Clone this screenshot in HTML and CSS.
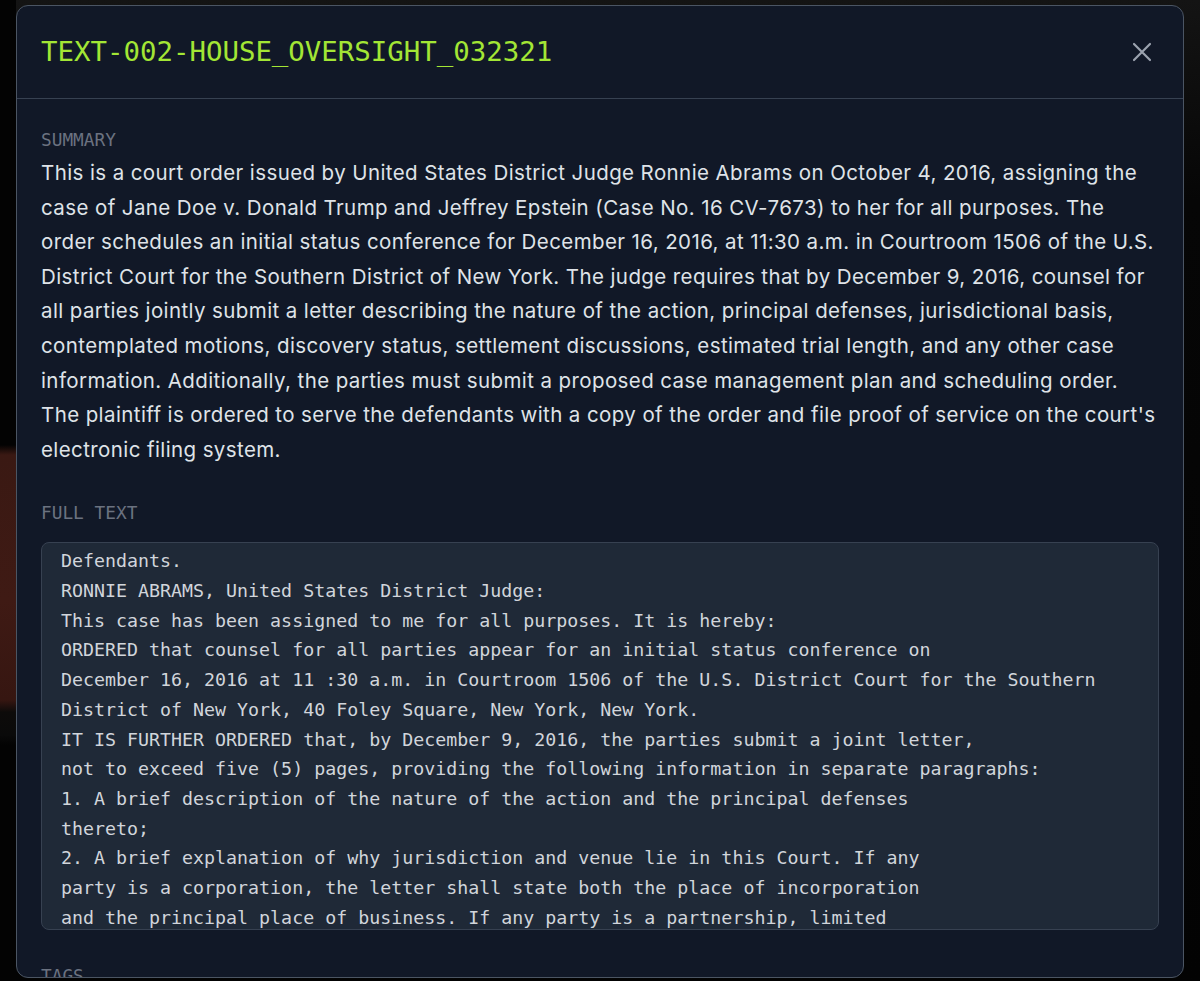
FILE: index.html
```html
<!DOCTYPE html>
<html lang="en">
<head>
<meta charset="utf-8">
<title>TEXT-002-HOUSE_OVERSIGHT_032321</title>
<link rel="stylesheet" href="styles.css">
</head>
<body>
<div class="backdrop">
  <div class="modal">
    <header class="modal-header">
      <h1 class="doc-title">TEXT-002-HOUSE_OVERSIGHT_032321</h1>
      <button class="close-btn" aria-label="Close">
        <svg width="22" height="22" viewBox="0 0 22 22" fill="none" stroke="currentColor" stroke-width="2.2" stroke-linecap="round">
          <path d="M3 3 L19 19 M19 3 L3 19"/>
        </svg>
      </button>
    </header>
    <div class="modal-body">
      <section class="section">
        <div class="label">SUMMARY</div>
        <p class="summary">This is a court order issued by United States District Judge Ronnie Abrams on October 4, 2016, assigning the case of Jane Doe v. Donald Trump and Jeffrey Epstein (Case No. 16 CV-7673) to her for all purposes. The order schedules an initial status conference for December 16, 2016, at 11:30 a.m. in Courtroom 1506 of the U.S. District Court for the Southern District of New York. The judge requires that by December 9, 2016, counsel for all parties jointly submit a letter describing the nature of the action, principal defenses, jurisdictional basis, contemplated motions, discovery status, settlement discussions, estimated trial length, and any other case information. Additionally, the parties must submit a proposed case management plan and scheduling order. The plaintiff is ordered to serve the defendants with a copy of the order and file proof of service on the court's electronic filing system.</p>
      </section>
      <section class="section">
        <div class="label">FULL TEXT</div>
        <div class="fulltext"><pre>Defendants.
RONNIE ABRAMS, United States District Judge:
This case has been assigned to me for all purposes. It is hereby:
ORDERED that counsel for all parties appear for an initial status conference on
December 16, 2016 at 11 :30 a.m. in Courtroom 1506 of the U.S. District Court for the Southern
District of New York, 40 Foley Square, New York, New York.
IT IS FURTHER ORDERED that, by December 9, 2016, the parties submit a joint letter,
not to exceed five (5) pages, providing the following information in separate paragraphs:
1. A brief description of the nature of the action and the principal defenses
thereto;
2. A brief explanation of why jurisdiction and venue lie in this Court. If any
party is a corporation, the letter shall state both the place of incorporation
and the principal place of business. If any party is a partnership, limited
liability company or trust, the letter shall state the citizenship of each of the
entity's members, shareholders, partners and/or trustees.</pre></div>
      </section>
      <section class="section">
        <div class="label">TAGS</div>
      </section>
    </div>
  </div>
</div>
</body>
</html>
```

FILE: styles.css
```css
* { box-sizing: border-box; }

html, body {
  margin: 0;
  padding: 0;
  height: 100%;
}

body {
  background: #030303;
  overflow: hidden;
}

.backdrop {
  height: 981px;
  padding: 5px 16px 0 16px;
  background:
    linear-gradient(180deg, #030303 0, #030303 445px, #3a1913 455px, #3f1a14 600px, #361611 700px, #0d0b0a 712px, #0a0a0a 735px, #030303 745px) left top / 16px 100% no-repeat,
    linear-gradient(180deg, #141414 0, #060606 200px, #030303 100%);
}

.modal {
  height: 973px;
  display: flex;
  flex-direction: column;
  background: #111827;
  border: 1px solid #4b5563;
  border-radius: 12px;
  overflow: hidden;
}

.modal-header {
  flex: none;
  display: flex;
  align-items: center;
  justify-content: space-between;
  height: 93px;
  padding: 0 24px 0 24px;
  border-bottom: 1px solid #374151;
}

.doc-title {
  margin: 0;
  font-family: "DejaVu Sans Mono", monospace;
  font-weight: normal;
  font-size: 27.4px;
  line-height: 36px;
  color: #a3e635;
}

.close-btn {
  background: none;
  border: none;
  padding: 0;
  margin-right: 5px;
  color: #9ca3af;
  display: flex;
  align-items: center;
  justify-content: center;
  width: 24px;
  height: 24px;
  cursor: pointer;
}

.modal-body {
  flex: 1;
  overflow: hidden;
  padding: 27px 24px 0 24px;
  display: flex;
  flex-direction: column;
  gap: 32px;
}

.label {
  font-family: "DejaVu Sans Mono", monospace;
  font-size: 17.8px;
  line-height: 28px;
  color: #6b7280;
}

.summary {
  margin: 2px 0 0 0;
  font-family: Inter, "Noto Sans", sans-serif;
  font-size: 20.5px;
  letter-spacing: 0.4px;
  line-height: 34.6px;
  color: #dfe3e8;
}

.fulltext {
  margin-top: 15px;
  height: 388px;
  overflow: hidden;
  background: #1f2937;
  border: 1px solid #374151;
  border-radius: 8px;
  padding: 3px 18px 0 19px;
}

.fulltext pre {
  margin: 0;
  font-family: "DejaVu Sans Mono", monospace;
  font-size: 18.3px;
  line-height: 29.7px;
  color: #d1d5db;
  white-space: pre-wrap;
}
```
